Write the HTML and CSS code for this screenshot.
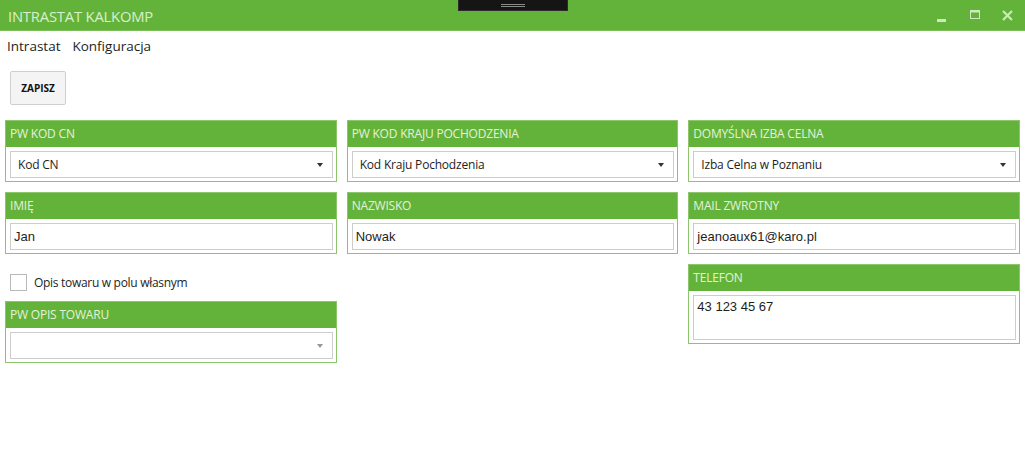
FILE: index.html
```html
<!DOCTYPE html>
<html lang="pl">
<head>
<meta charset="utf-8">
<title>INTRASTAT KALKOMP</title>
<link rel="stylesheet" href="styles.css">
</head>
<body>
<div class="window">
  <header class="titlebar">
    <div class="title">INTRASTAT KALKOMP</div>
    <div class="grip"><span class="grip-lines"></span></div>
    <div class="winbtns">
      <span class="wb wb-min"><svg width="10" height="10" viewBox="0 0 10 10"><rect x="0" y="6" width="9" height="3" fill="currentColor"/></svg></span>
      <span class="wb wb-max"><svg width="10" height="10" viewBox="0 0 10 10"><rect x="0.5" y="0.5" width="9" height="8" fill="none" stroke="currentColor"/><rect x="0.5" y="0.5" width="9" height="2" fill="currentColor"/></svg></span>
      <span class="wb wb-close"><svg width="11" height="11" viewBox="0 0 11 11"><path d="M1 1 L10 10 M10 1 L1 10" stroke="currentColor" stroke-width="2.2"/></svg></span>
    </div>
  </header>

  <nav class="menu">
    <span class="menu-item">Intrastat</span>
    <span class="menu-item">Konfiguracja</span>
  </nav>

  <div class="toolbar">
    <button class="btn">ZAPISZ</button>
  </div>

  <main class="grid">
    <div class="col">
      <section class="panel">
        <div class="panel-head">PW KOD CN</div>
        <div class="panel-body">
          <div class="combo"><span class="val">Kod CN</span><span class="arrow"></span></div>
        </div>
      </section>
      <section class="panel">
        <div class="panel-head">IMIĘ</div>
        <div class="panel-body">
          <div class="textbox">Jan</div>
        </div>
      </section>
      <label class="check">
        <span class="box"></span>
        <span class="check-label">Opis towaru w polu własnym</span>
      </label>
      <section class="panel">
        <div class="panel-head">PW OPIS TOWARU</div>
        <div class="panel-body">
          <div class="combo disabled"><span class="val"></span><span class="arrow light"></span></div>
        </div>
      </section>
    </div>

    <div class="col">
      <section class="panel">
        <div class="panel-head">PW KOD KRAJU POCHODZENIA</div>
        <div class="panel-body">
          <div class="combo"><span class="val">Kod Kraju Pochodzenia</span><span class="arrow"></span></div>
        </div>
      </section>
      <section class="panel">
        <div class="panel-head">NAZWISKO</div>
        <div class="panel-body">
          <div class="textbox">Nowak</div>
        </div>
      </section>
    </div>

    <div class="col">
      <section class="panel">
        <div class="panel-head">DOMYŚLNA IZBA CELNA</div>
        <div class="panel-body">
          <div class="combo"><span class="val">Izba Celna w Poznaniu</span><span class="arrow"></span></div>
        </div>
      </section>
      <section class="panel">
        <div class="panel-head">MAIL ZWROTNY</div>
        <div class="panel-body">
          <div class="textbox">jeanoaux61@karo.pl</div>
        </div>
      </section>
      <section class="panel">
        <div class="panel-head">TELEFON</div>
        <div class="panel-body">
          <div class="textbox tall">43 123 45 67</div>
        </div>
      </section>
    </div>
  </main>
</div>
</body>
</html>
```

FILE: styles.css
```css
* { box-sizing: border-box; }
html, body { margin: 0; padding: 0; background: #fff; }
body {
  width: 1025px;
  height: 462px;
  overflow: hidden;
  font-family: "Open Sans", "Noto Sans", sans-serif;
  color: #1e1e1e;
}

.titlebar {
  height: 31px;
  background: #63b33b;
  border-bottom: 1px solid #7cc05a;
  display: flex;
  align-items: center;
  position: relative;
}
.title {
  padding-left: 8px;
  font-size: 14.8px;
  color: #d9efcd;
  letter-spacing: -0.2px;
  padding-top: 1px;
}
.grip {
  position: absolute;
  left: 458px;
  top: 0;
  width: 110px;
  height: 11px;
  background: #151515;
  border: 1px solid #2c2c2c;
  border-top: none;
  display: flex;
  justify-content: center;
  align-items: center;
}
.grip-lines {
  width: 24px;
  height: 3px;
  border-top: 1px solid #8a8a8a;
  border-bottom: 1px solid #8a8a8a;
}
.winbtns {
  margin-left: auto;
  display: flex;
  align-items: center;
  color: #cde8be;
  padding-right: 1px;
}
.wb { display: flex; width: 33px; justify-content: center; }
.wb-min svg { margin-top: 6px; }

.menu {
  display: flex;
  gap: 12px;
  padding: 5px 0 0 7px;
  height: 34px;
  font-size: 13.5px;
}
.menu-item { line-height: 20px; }

.toolbar { padding: 6px 0 0 10px; height: 55px; }
.btn {
  width: 56px;
  height: 34px;
  background: #f4f4f4;
  border: 1px solid #cfcfcf;
  border-radius: 2px;
  font-family: "Open Sans", "Noto Sans", sans-serif;
  font-weight: 700;
  font-size: 10px;
  color: #111;
  padding: 0;
}

.grid {
  display: grid;
  grid-template-columns: repeat(3, 1fr);
  column-gap: 10px;
  padding: 0 5px;
  align-items: start;
}
.col { display: flex; flex-direction: column; gap: 10px; }

.panel { border: 1px solid #8cc56c; background: #fff; }
.panel-head {
  height: 26px;
  background: #63b33b;
  color: #e3f2da;
  font-size: 12px;
  line-height: 26px;
  padding-left: 4px;
  letter-spacing: -0.2px;
}
.panel-body { padding: 4px 3px 3px 4px; }

.combo, .textbox {
  height: 27px;
  border: 1px solid #cdcdcd;
  background: #fff;
  display: flex;
  align-items: center;
}
.combo { padding: 0 9px 0 7px; font-size: 12px; letter-spacing: -0.2px; }
.combo .val { flex: 1; }
.arrow {
  width: 0; height: 0;
  border-left: 3.5px solid transparent;
  border-right: 3.5px solid transparent;
  border-top: 4px solid #333;
}
.arrow.light { border-top-color: #999; }
.textbox {
  padding: 0 3px;
  font-family: "Liberation Sans", Arial, sans-serif;
  font-size: 13px;
}
.textbox.tall { height: 45px; align-items: flex-start; padding-top: 3px; }

.check {
  display: flex;
  align-items: center;
  gap: 7px;
  margin-top: 10px;
  padding-left: 5px;
  font-size: 12px;
  letter-spacing: -0.3px;
}
.box {
  width: 17px;
  height: 17px;
  border: 1px solid #b9b9b9;
  background: #fff;
}
```
